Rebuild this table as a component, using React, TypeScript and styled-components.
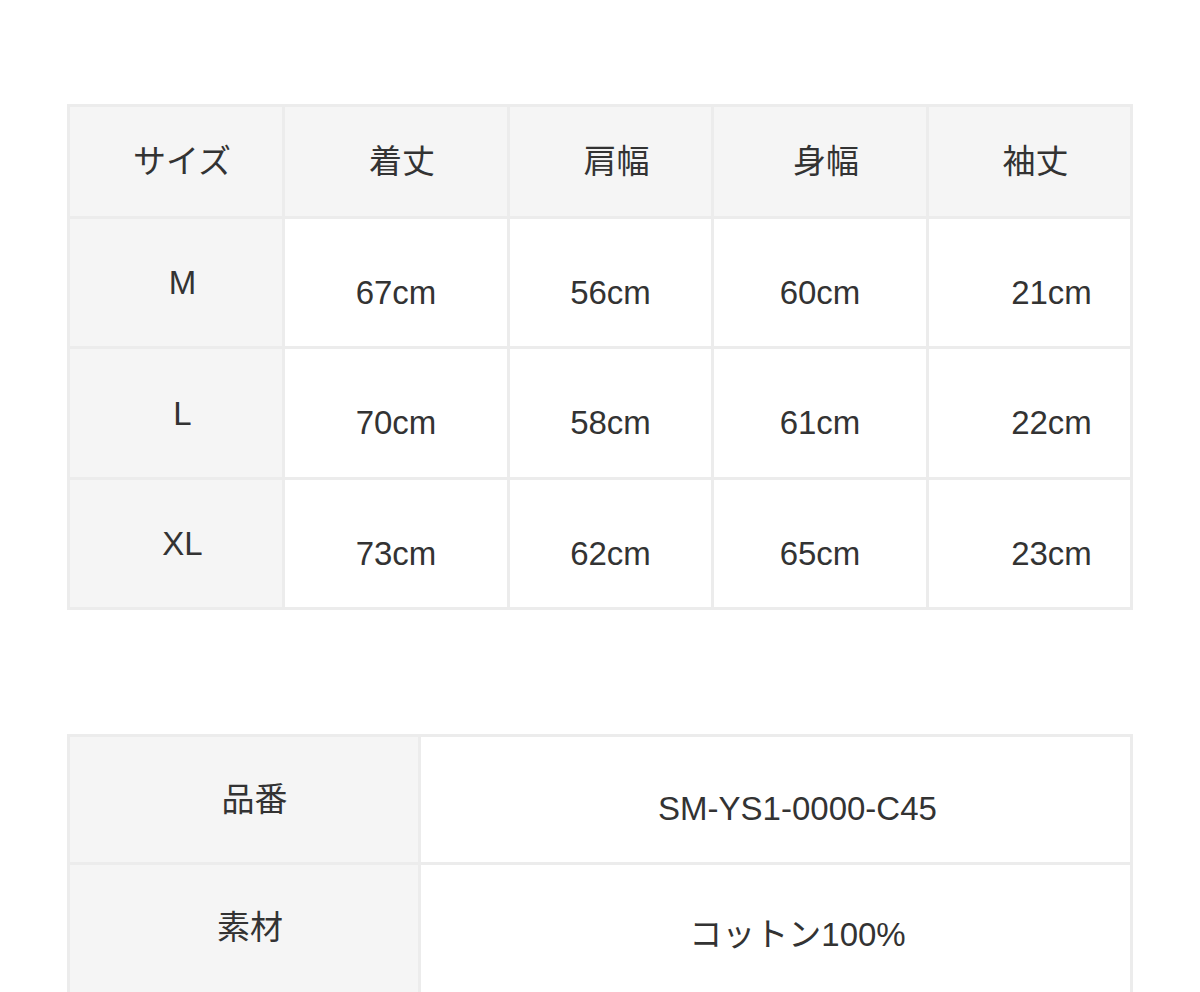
import React from 'react';
import styled, {createGlobalStyle} from 'styled-components';

const GlobalStyle = createGlobalStyle`
  body {
    margin: 0;
    background: #fff;
    font-family: "Liberation Sans", "Noto Sans CJK JP", sans-serif;
    color: #333;
  }
`

const Page = styled.div`
  padding: 104px 67px 0;
`

const Grid = styled.div<{ $cols: string; $rows: string }>`
  display: grid;
  grid-template-columns: ${p => p.$cols};
  grid-template-rows: ${p => p.$rows};
  gap: 3px;
  padding: 3px;
  background: #ececec;
  width: 1066px;
  box-sizing: border-box;
  & + & {
    margin-top: 124px;
  }
`

const Cell = styled.div<{ $head?: boolean; $left?: number; $top?: number; $bottom?: number }>`
  display: flex;
  align-items: center;
  justify-content: center;
  background: ${p => p.$head ? '#f5f5f5' : '#fff'};
  font-size: 33px;
  line-height: 1;
  padding-left: ${p => p.$left || 0}px;
  padding-top: ${p => p.$top || 0}px;
  padding-bottom: ${p => p.$bottom || 0}px;
`

const headers = ['サイズ', '着丈', '肩幅', '身幅', '袖丈']

const sizes = [
  {size: 'M', values: ['67cm', '56cm', '60cm', '21cm']},
  {size: 'L', values: ['70cm', '58cm', '61cm', '22cm']},
  {size: 'XL', values: ['73cm', '62cm', '65cm', '23cm']},
]

// the last row runs past the bottom of the window
const details = [
  {label: '品番', value: 'SM-YS1-0000-C45', left: 21, top: 17, bottom: 0},
  {label: '素材', value: 'コットン100%', left: 12, top: 14, bottom: 15},
]

function App() {
  return (
    <Page>
      <GlobalStyle />
      <Grid $cols="212px 222px 201px 212px 201px" $rows="109px 127px 128px 127px">
        {headers.map(h => <Cell key={h} $head $left={12}>{h}</Cell>)}
        {sizes.map(row => (
          <React.Fragment key={row.size}>
            <Cell $head $left={13}>{row.size}</Cell>
            {row.values.map((v, i) => (
              <Cell key={i} $left={i === 3 ? 44 : 0} $top={19}>{v}</Cell>
            ))}
          </React.Fragment>
        ))}
      </Grid>
      <Grid $cols="348px 709px" $rows="125px 140px">
        {details.map(d => (
          <React.Fragment key={d.label}>
            <Cell $head $left={d.left} $bottom={d.bottom}>{d.label}</Cell>
            <Cell $left={44} $top={d.top} $bottom={d.bottom}>{d.value}</Cell>
          </React.Fragment>
        ))}
      </Grid>
    </Page>
  );
}

export default App;
